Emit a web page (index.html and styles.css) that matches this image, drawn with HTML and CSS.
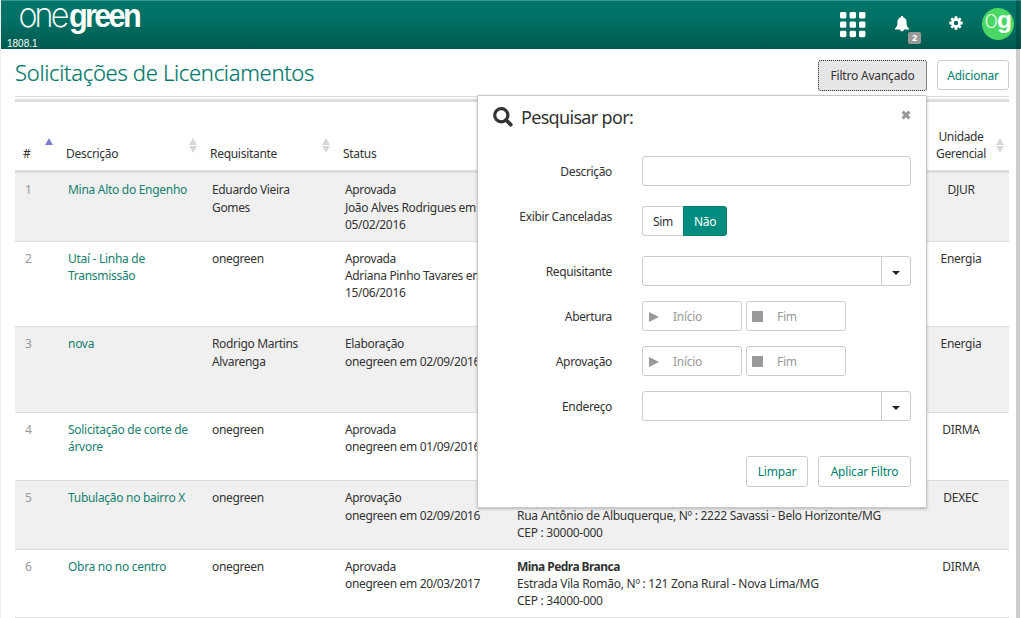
FILE: index.html
```html
<!DOCTYPE html>
<html lang="pt-BR">
<head>
<meta charset="utf-8">
<title>Solicitações de Licenciamentos</title>
<link rel="stylesheet" href="styles.css">
</head>
<body>
<div class="app">
  <header class="topbar">
    <div class="brand">
      <svg class="logo" width="126" height="36" viewBox="0 0 126 36">
        <text class="logo-thin" x="-0.500" y="26" textLength="48" lengthAdjust="spacingAndGlyphs">one</text>
        <text class="logo-bold" x="50" y="26" textLength="70" lengthAdjust="spacingAndGlyphs">green</text>
      </svg>
      <span class="version">1808.1</span>
    </div>
    <nav class="tools">
      <svg class="apps" width="26" height="26" viewBox="0 0 26 26" fill="#fff">
        <rect x="0" y="0" width="6.4" height="6.4" rx="1.4"/><rect x="9.6" y="0" width="6.4" height="6.4" rx="1.4"/><rect x="19" y="0" width="6.4" height="6.4" rx="1.4"/>
        <rect x="0" y="9.4" width="6.4" height="6.4" rx="1.4"/><rect x="9.6" y="9.4" width="6.4" height="6.4" rx="1.4"/><rect x="19" y="9.4" width="6.4" height="6.4" rx="1.4"/>
        <rect x="0" y="18.8" width="6.4" height="6.4" rx="1.4"/><rect x="9.6" y="18.8" width="6.4" height="6.4" rx="1.4"/><rect x="19" y="18.8" width="6.4" height="6.4" rx="1.4"/>
      </svg>
      <div class="alerts">
        <svg width="14" height="16" viewBox="0 0 14 16" fill="#fff"><path d="M7 0c.8 0 1.2.5 1.2 1.3C10.500 1.900 11.500 3.700 11.500 6c0 3.200.7 5 2.500 6.600v.8H0v-.8C1.800 11 2.500 9.200 2.500 6c0-2.300 1-4.100 3.300-4.700C5.800.5 6.200 0 7 0zM5 13.300h4c-.2 1.400-1 2-2 2s-1.800-.6-2-2z"/></svg>
        <span class="badge">2</span>
      </div>
      <svg class="gear" width="14" height="14" viewBox="-7 -7 14 14">
        <g fill="#fff"><rect x="-1.400" y="-6.700" width="2.800" height="13.400" rx=".5"/><rect x="-1.400" y="-6.700" width="2.800" height="13.400" rx=".5" transform="rotate(45)"/><rect x="-1.400" y="-6.700" width="2.800" height="13.400" rx=".5" transform="rotate(90)"/><rect x="-1.400" y="-6.700" width="2.800" height="13.400" rx=".5" transform="rotate(135)"/></g>
        <circle r="3.600" fill="none" stroke="#fff" stroke-width="2.600"/><circle r="2.200" fill="#006d60"/>
      </svg>
      <svg class="avatar" width="32" height="32" viewBox="0 0 32 32">
        <circle cx="16" cy="16" r="16" fill="#4bd763"/>
        <text class="avatar-thin" x="2.500" y="20" textLength="13.500" lengthAdjust="spacingAndGlyphs">o</text>
        <text class="avatar-bold" x="15" y="20" textLength="15" lengthAdjust="spacingAndGlyphs">g</text>
      </svg>
    </nav>
  </header>

  <main class="page">
    <div class="titlebar">
      <h1>Solicitações de Licenciamentos</h1>
      <div class="actions">
        <button class="btn btn-active">Filtro Avançado</button>
        <button class="btn b-add">Adicionar</button>
      </div>
    </div>
    <table class="list">
      <colgroup><col class="c-num"><col class="c-desc"><col class="c-req"><col class="c-status"><col class="c-addr"><col class="c-unit"></colgroup>
      <thead>
        <tr>
          <th><div class="th"><span>#</span><i class="sort asc"></i></div></th>
          <th><div class="th"><span>Descrição</span><i class="sort"></i></div></th>
          <th><div class="th"><span>Requisitante</span><i class="sort"></i></div></th>
          <th><div class="th"><span>Status</span></div></th>
          <th></th>
          <th><div class="th th-unit"><span>Unidade<br>Gerencial</span><i class="sort"></i></div></th>
        </tr>
      </thead>
      <tbody>
        <tr class="h69"><td class="num">1</td><td><a>Mina Alto do Engenho</a></td><td>Eduardo Vieira<br>Gomes</td><td>Aprovada<br>João Alves Rodrigues em<br>05/02/2016</td><td></td><td class="unit">DJUR</td></tr>
        <tr class="h85"><td class="num">2</td><td><a>Utaí - Linha de<br>Transmissão</a></td><td>onegreen</td><td>Aprovada<br>Adriana Pinho Tavares em<br>15/06/2016</td><td></td><td class="unit">Energia</td></tr>
        <tr class="h86"><td class="num">3</td><td><a>nova</a></td><td>Rodrigo Martins<br>Alvarenga</td><td>Elaboração<br>onegreen em 02/09/2016</td><td></td><td class="unit">Energia</td></tr>
        <tr class="h68"><td class="num">4</td><td><a>Solicitação de corte de<br>árvore</a></td><td>onegreen</td><td>Aprovada<br>onegreen em 01/09/2016</td><td></td><td class="unit">DIRMA</td></tr>
        <tr class="h69"><td class="num">5</td><td><a>Tubulação no bairro X</a></td><td>onegreen</td><td>Aprovação<br>onegreen em 02/09/2016</td><td><br>Rua Antônio de Albuquerque, Nº : 2222 Savassi - Belo Horizonte/MG<br>CEP : 30000-000</td><td class="unit">DEXEC</td></tr>
        <tr class="h68"><td class="num">6</td><td><a>Obra no no centro</a></td><td>onegreen</td><td>Aprovada<br>onegreen em 20/03/2017</td><td><b>Mina Pedra Branca</b><br>Estrada Vila Romão, Nº : 121 Zona Rural - Nova Lima/MG<br>CEP : 34000-000</td><td class="unit">DIRMA</td></tr>
      </tbody>
    </table>
  </main>

  <section class="filter">
    <div class="filter-head">
      <svg width="20" height="20" viewBox="0 0 20 20" fill="none" stroke="#333" stroke-width="3.200"><circle cx="8.300" cy="8.300" r="6.600"/><path d="M13 13l4.700 4.700" stroke-width="3.800" stroke-linecap="round"/></svg>
      <h2>Pesquisar por:</h2>
      <svg class="close" width="10" height="10" viewBox="0 0 10 10"><path d="M1.600 1.600l6.800 6.800M8.400 1.600L1.600 8.400" stroke="#999" stroke-width="3"/></svg>
    </div>
    <form class="fields">
      <div class="field f-desc"><label>Descrição</label><div class="input"></div></div>
      <div class="field f-toggle"><label>Exibir Canceladas</label><div class="toggle"><span>Sim</span><span class="on">Não</span></div></div>
      <div class="field"><label>Requisitante</label><div class="input combo"><i class="caret"></i></div></div>
      <div class="field"><label>Abertura</label><div class="dates">
        <div class="date"><i class="play"></i>Início</div><div class="date"><i class="stop"></i>Fim</div></div></div>
      <div class="field"><label>Aprovação</label><div class="dates">
        <div class="date"><i class="play"></i>Início</div><div class="date"><i class="stop"></i>Fim</div></div></div>
      <div class="field"><label>Endereço</label><div class="input combo"><i class="caret"></i></div></div>
    </form>
    <div class="filter-actions">
      <button class="btn b-clear">Limpar</button>
      <button class="btn b-apply">Aplicar Filtro</button>
    </div>
  </section>
  <div class="edge"></div>
</div>
</body>
</html>
```

FILE: styles.css
```css
* { box-sizing: border-box; }
body {
  margin: 0;
  font-family: "Noto Sans", "Open Sans", sans-serif;
  font-size: 12px;
  line-height: 17.14px;
  letter-spacing: -0.29px;
  color: #333;
  background: #fff;
}
.app { position: relative; width: 1021px; height: 618px; overflow: hidden; border-left: 1px solid #eee; }

/* Top bar */
.topbar {
  display: flex;
  justify-content: space-between;
  height: 49px;
  padding-right: 7px;
  border-top: 1px solid #409a90;
  background: linear-gradient(#007668, #007063 40%, #005a50);
}
.brand { display: flex; flex-direction: column; padding-left: 6px; }
.logo { margin-left: 12px; flex: none; overflow: visible; }
.logo text, .avatar text { fill: #fff; }
.logo .logo-thin { font: 200 34px Inter, sans-serif; letter-spacing: -3px; stroke: #fff; stroke-width: .2px; }
.logo .logo-bold { font: bold 34px "Liberation Sans", sans-serif; letter-spacing: -3px; }
.version { margin-top: 1px; font: 10px/12px "Liberation Sans", sans-serif; letter-spacing: 0; color: #fff; }
.tools { display: flex; align-items: flex-start; }
.apps { margin: 11px 29px 0 0; }
.alerts { display: flex; width: 28px; margin-top: 15px; }
.badge {
  width: 13px; height: 12px; margin: 16px 0 0 -1px;
  border-radius: 2px; background: #999; color: #fff;
  font-size: 9px; font-weight: bold; line-height: 12px; text-align: center;
}
.gear { margin: 15px 19px 0 26px; }
.avatar { margin-top: 7px; }
.avatar-thin { font: 200 24px Inter, sans-serif; letter-spacing: 0; }
.avatar-bold { font: bold 24px "Liberation Sans", sans-serif; letter-spacing: 0; }

/* Title */
.page { padding-left: 14px; width: 1008px; }
.titlebar { display: flex; justify-content: space-between; height: 48px; border-bottom: 1px solid #ddd; }
h1 { margin: 8px 0 0; font-size: 22px; font-weight: 300; line-height: 30px; letter-spacing: -0.3px; color: #00776a; -webkit-text-stroke: .2px #00776a; }
.actions { display: flex; gap: 10px; padding-top: 11px; }
.btn {
  height: 31px; padding: 0; width: 72px;
  border: 1px solid #ccc; border-radius: 3px; background: #fff;
  color: #00806f; font: inherit; letter-spacing: -0.2px;
}
.b-add { height: 30px; padding-top: 1px; }
.btn-active { width: 109px; border: 1px dotted #222; background: #e6e6e6; color: #333; }

/* Table */
.list { width: 994px; margin-top: 2px; border-collapse: separate; border-spacing: 0; table-layout: fixed; border-top: 3px solid #ddd; }
.c-num { width: 45px; } .c-desc { width: 144px; } .c-req { width: 133px; }
.c-status { width: 172px; } .c-addr { width: 404px; } .c-unit { width: 96px; }
th { height: 71px; padding: 0 7.500px 8px 6px; border-bottom: 3px solid #ddd; font-weight: 400; text-align: left; vertical-align: bottom; white-space: nowrap; }
.th { display: flex; justify-content: space-between; align-items: flex-end; }
th:first-child { padding-left: 8px; }
.sort { display: flex; flex-direction: column; gap: 1px; width: 8px; margin-bottom: 9px; }
.sort::before { content: ""; border: 4px solid transparent; border-top: 0; border-bottom: 7px solid #d8d8d8; }
.sort::after { content: ""; border: 4px solid transparent; border-bottom: 0; border-top: 7px solid #d8d8d8; }
.asc::before { border-bottom-color: #7f7fd0; }
.asc::after { border-top-color: transparent; }
.th-unit { padding-left: 17px; text-align: center; margin-right: -2px; letter-spacing: -0.35px; }
td { padding: 8px 0 0 8px; border-bottom: 1px solid #ddd; vertical-align: top; white-space: nowrap; }
tbody tr:nth-child(odd) { background: #f0f0f0; }
tbody tr:nth-child(odd) td { padding-top: 8.400px; }
td.num { padding-left: 10px; color: #999; }
td.unit { padding-left: 0; text-align: center; }
td:nth-child(3), td:nth-child(4) { letter-spacing: -0.34px; }
td:nth-child(5) { letter-spacing: -0.27px; }
td a { color: #15806f; }
td b { letter-spacing: -0.550px; }
.h68 { height: 68px; } .h69 { height: 69px; } .h85 { height: 85px; } .h86 { height: 86px; }

/* Filter popup */
.filter {
  position: absolute; left: 476px; top: 95px; width: 450px; height: 413px;
  padding: 11px 15px 0; border: 1px solid #c8c8c8; border-radius: 1px;
  background: #fff; box-shadow: 0 1px 3px rgba(0,0,0,.25);
}
.filter-head { display: flex; align-items: flex-start; height: 49px; }
h2 { flex: 1; margin: -4px 0 0 8px; font-size: 18px; font-weight: 400; line-height: 28px; letter-spacing: -0.680px; }
.close { margin-top: 3px; }
.fields { display: flex; flex-direction: column; gap: 15px; }
.field { display: grid; grid-template-columns: 120px 269px; column-gap: 29px; height: 30px; align-items: center; }
.field label { padding: 2px 1px 0 0; text-align: right; letter-spacing: -0.350px; }
.f-desc { margin-bottom: 5px; }
.f-toggle { margin-bottom: 5px; }
.f-toggle label { margin-top: -10px; }
.input { height: 30px; border: 1px solid #ccc; border-radius: 3px; }
.combo { display: flex; justify-content: flex-end; }
.caret { display: flex; justify-content: center; align-items: center; width: 29px; border-left: 1px solid #ccc; }
.caret::before { content: ""; margin-top: 3px; border: 4px solid transparent; border-top-color: #222; border-bottom: 0; }
.toggle { display: flex; height: 30px; line-height: 29px; text-align: center; }
.toggle span { width: 41px; border: 1px solid #ccc; border-right: 0; border-radius: 3px 0 0 3px; }
.toggle .on { width: 44px; border: 1px solid #007d70; border-radius: 0 3px 3px 0; background: #008c7e; color: #fff; }
.dates { display: flex; gap: 4px; }
.date { display: flex; align-items: center; width: 100px; height: 30px; padding: 1px 0 0 6px; border: 1px solid #ccc; border-radius: 3px; color: #999; }
.play { margin-right: 14px; border: 5.5px solid transparent; border-left: 10px solid #999; border-right: 0; }
.stop { width: 11px; height: 11px; margin: 0 14px 0 -1px; background: #999; }
.filter-actions { display: flex; justify-content: flex-end; gap: 10px; margin-top: 35px; }
.b-clear { width: 62px; } .b-apply { width: 93px; }

/* Scroll edge shading */
.edge { position: absolute; right: 1px; top: 0; width: 4px; height: 618px; background: rgba(0,0,0,.2); }
```
